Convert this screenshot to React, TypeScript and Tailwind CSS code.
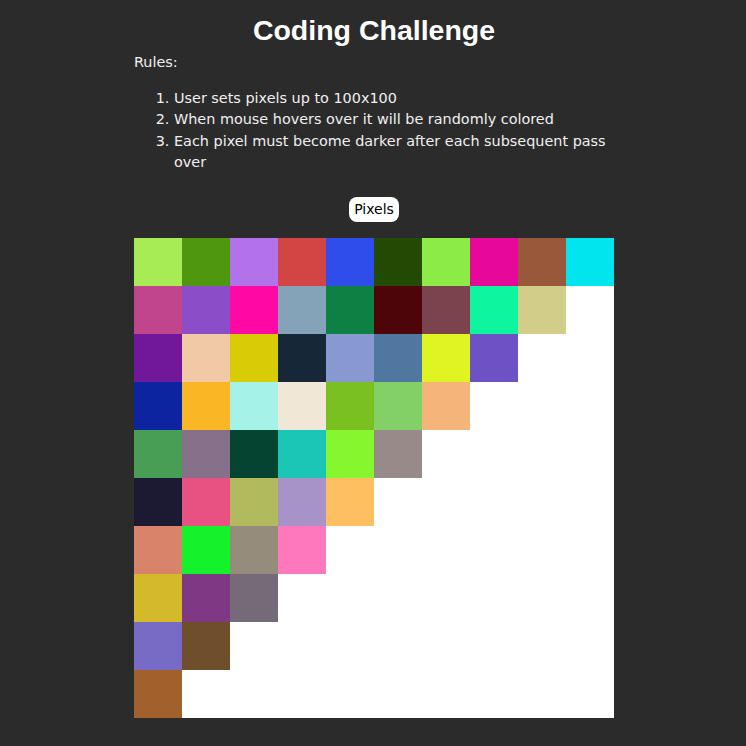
import React from "react";

const rows: string[][] = [
  ["#a8ec55", "#4e970e", "#b172ea", "#d34545", "#2f4deb", "#224a04", "#8deb47", "#e8079b", "#9a583b", "#00e5ee"],
  ["#c0458c", "#8c4ec8", "#ff08a3", "#84a2b8", "#0e8043", "#4d0509", "#7a434d", "#0ef5a0", "#d2cd88"],
  ["#70179a", "#f2c9a7", "#d8cc06", "#162837", "#8898d0", "#4f779f", "#e0f424", "#6c52c4"],
  ["#0d24a0", "#fbb626", "#a4f2e8", "#f1e7d7", "#79c020", "#83d166", "#f5b57a"],
  ["#489e55", "#87718a", "#044430", "#1cc6b7", "#86f62f", "#988a89"],
  ["#1c1a32", "#e75283", "#b1bb5d", "#a893c8", "#febf60"],
  ["#d9836a", "#13f22a", "#968c7b", "#fd78bd"],
  ["#d4ba2a", "#7f3884", "#756a78"],
  ["#776bc6", "#6f4e2b"],
  ["#a2612c"],
];

export default function App() {
  const cells: { key: string; color: string }[] = [];
  for (let r = 0; r < 10; r++) {
    for (let c = 0; c < 10; c++) {
      cells.push({ key: `${r}-${c}`, color: rows[r][c] ?? "#ffffff" });
    }
  }
  return (
    <div className="min-h-[746px] w-full bg-[#2b2b2b] pl-[2px] text-[#f0f0f0] [font-family:'DejaVu_Sans',sans-serif]">
      <div className="mx-auto w-[480px] pt-[13px]">
        <h1 className="text-center text-[28.5px] leading-[34px] font-bold text-white [font-family:'Liberation_Sans',Arial,sans-serif]">
          Coding Challenge
        </h1>
        <p className="mt-[4.5px] text-[14.4px] leading-[21.5px]">Rules:</p>
        <ol className="mt-[14.5px] list-decimal pl-[40px] text-[14.4px] leading-[21.5px]">
          <li>User sets pixels up to 100x100</li>
          <li>When mouse hovers over it will be randomly colored</li>
          <li>Each pixel must become darker after each subsequent pass over</li>
        </ol>
        <div className="mt-[23px] flex justify-center">
          <button className="h-[25px] rounded-[8px] bg-white px-[5px] text-[14px] leading-[25px] text-black [font-family:'DejaVu_Sans',sans-serif]">
            Pixels
          </button>
        </div>
        <div className="mt-[16px] grid grid-cols-[repeat(10,48px)] grid-rows-[repeat(10,48px)] bg-white">
          {cells.map((cell) => (
            <div key={cell.key} style={{ backgroundColor: cell.color }} />
          ))}
        </div>
      </div>
    </div>
  );
}
